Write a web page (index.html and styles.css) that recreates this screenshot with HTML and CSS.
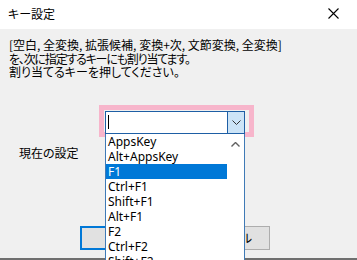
FILE: index.html
```html
<!DOCTYPE html>
<html lang="ja">
<head>
<meta charset="utf-8">
<title>キー設定</title>
<link rel="stylesheet" href="styles.css">
</head>
<body>
<div class="window">
  <div class="titlebar">
    <span class="title">キー設定</span>
    <svg class="close" width="11" height="11" viewBox="0 0 11 11"><path d="M0.5 0.5 L10.5 10.5 M10.5 0.5 L0.5 10.5" stroke="#000" stroke-width="1.1" fill="none"/></svg>
  </div>
  <div class="content">
    <div class="msg">
      <div>[空白, 全変換, 拡張候補, 変換+次, 文節変換, 全変換]</div>
      <div class="tight">を、次に指定するキーにも割り当てます。</div>
      <div>割り当てるキーを押してください。</div>
    </div>
    <div class="combo">
      <div class="combo-edit"><span class="caret"></span></div>
      <div class="combo-btn">
        <svg width="9" height="5" viewBox="0 0 9 5"><path d="M0.5 0.5 L4.5 4.5 L8.5 0.5" stroke="#333" stroke-width="1" fill="none"/></svg>
      </div>
    </div>
    <div class="label">現在の設定</div>
    <div class="buttons">
      <div class="btn btn-default">OK</div>
      <div class="btn">キャンセル</div>
    </div>
  </div>
  <div class="edge"></div>

  <div class="highlight"></div>
  <div class="dropdown">
    <ul class="items">
      <li>AppsKey</li>
      <li>Alt+AppsKey</li>
      <li class="sel">F1</li>
      <li>Ctrl+F1</li>
      <li>Shift+F1</li>
      <li>Alt+F1</li>
      <li>F2</li>
      <li>Ctrl+F2</li>
      <li>Shift+F2</li>
    </ul>
    <div class="scroll">
      <svg width="9" height="5" viewBox="0 0 9 5"><path d="M0.5 4.5 L4.5 0.5 L8.5 4.5" stroke="#606060" stroke-width="1.4" fill="none"/></svg>
    </div>
  </div>
</div>
</body>
</html>
```
FILE: styles.css
```css
* { box-sizing: border-box; }
html, body { margin: 0; padding: 0; }
body {
  width: 357px;
  height: 260px;
  overflow: hidden;
  background: #f0f0f0;
  font-family: "Noto Sans CJK JP", "Noto Sans", sans-serif;
  font-size: 12px;
  color: #000;
  font-feature-settings: "palt" 1;
}
.window {
  position: relative;
  width: 357px;
  height: 260px;
  overflow: hidden;
  display: flex;
  flex-direction: column;
}
.titlebar {
  height: 29px;
  flex: none;
  background: #fff;
  display: flex;
  align-items: center;
  justify-content: space-between;
  padding: 0 8px 2px 8px;
}
.title { line-height: 14px; }
.close { margin-right: 10px; }
.content {
  flex: 1;
  padding: 0 9px;
}
.msg {
  margin-top: 9px;
  line-height: 13.5px;
}
.tight { letter-spacing: -1.2px; }
.combo {
  margin-top: 32px;
  margin-left: 96px;
  width: 140px;
  height: 23px;
  border: 1px solid #1e5fa5;
  background: #fff;
  display: flex;
  position: relative;
  z-index: 2;
}
.combo-edit {
  flex: 1;
  padding: 3px 2px;
}
.caret {
  display: block;
  width: 1px;
  height: 14px;
  background: #000;
}
.combo-btn {
  width: 17px;
  background: #cce4f7;
  border-left: 1px solid #1e5fa5;
  display: flex;
  align-items: center;
  justify-content: center;
}
.label {
  margin-top: 12px;
  margin-left: 10px;
  line-height: 14px;
}
.buttons {
  margin-top: 66px;
  margin-left: 71px;
  display: flex;
  gap: 10px;
}
.btn {
  width: 90px;
  height: 24px;
  background: #e1e1e1;
  border: 1px solid #adadad;
  display: flex;
  align-items: center;
  justify-content: center;
  line-height: 14px;
}
.btn-default {
  border: 2px solid #0078d7;
}
.edge {
  height: 2px;
  flex: none;
  background: #6f6f6f;
}
.highlight {
  position: absolute;
  left: 99px;
  top: 105px;
  width: 155px;
  height: 32px;
  border: 5px solid #f7b5cb;
  z-index: 1;
}
.dropdown {
  position: absolute;
  left: 105px;
  top: 134px;
  width: 140px;
  height: 126px;
  overflow: hidden;
  background: #fff;
  border: 1px solid #3f7ab6;
  border-top: none;
  border-bottom: none;
  display: flex;
  z-index: 3;
}
.items {
  list-style: none;
  margin: 0;
  padding: 0;
  flex: 1;
  font-family: "Noto Sans", sans-serif;
  font-size: 12px;
}
.items li {
  height: 15px;
  line-height: 15px;
  padding-left: 2px;
  white-space: nowrap;
}
.items li.sel {
  background: #0078d7;
  color: #fff;
}
.scroll {
  width: 17px;
  background: #fff;
  display: flex;
  justify-content: center;
  padding-top: 8px;
}
.scroll svg { display: block; }
```
